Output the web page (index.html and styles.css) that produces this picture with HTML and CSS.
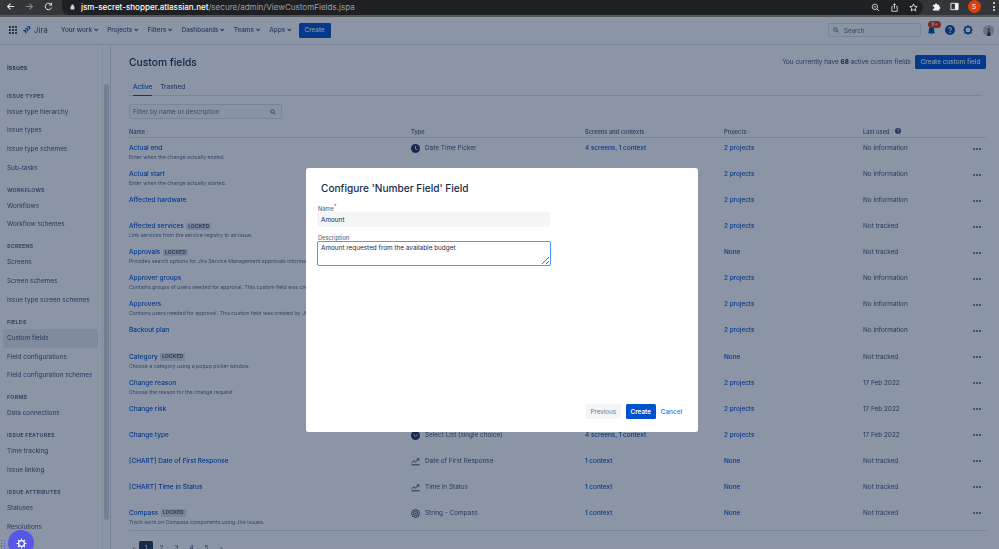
FILE: index.html
```html
<!DOCTYPE html>
<html lang="en">
<head>
<meta charset="utf-8">
<title>Custom fields</title>
<link rel="stylesheet" href="styles.css">
</head>
<body>
<header class="chrome">
  <div class="chrome-nav">
    <svg class="cicon" viewBox="0 0 10 10"><path d="M9 5H2M5 1.8 1.8 5 5 8.2" fill="none" stroke="#e8eaed" stroke-width="1.2"/></svg>
    <svg class="cicon" viewBox="0 0 10 10"><path d="M1 5h7M5 1.8 8.2 5 5 8.2" fill="none" stroke="#84878b" stroke-width="1.2"/></svg>
    <svg class="cicon" viewBox="0 0 10 10"><path d="M8.4 6.2A3.6 3.6 0 1 1 8 3M8.4.9v2.6H5.8" fill="none" stroke="#e8eaed" stroke-width="1.1"/></svg>
  </div>
  <div class="omnibox">
    <svg class="lock" viewBox="0 0 6 7"><path d="M1.5 3V2a1.5 1.5 0 0 1 3 0v1h.8v3.6H.7V3z" fill="#d5d7da"/></svg>
    <span class="url"><b>jsm-secret-shopper.atlassian.net</b>/secure/admin/ViewCustomFields.jspa</span>
    <div class="omni-actions">
      <svg class="cicon" viewBox="0 0 10 10"><circle cx="4.3" cy="4.3" r="3" fill="none" stroke="#d5d7da"/><path d="M6.5 6.5 9 9M3 4.3h2.6" stroke="#d5d7da"/></svg>
      <svg class="cicon" viewBox="0 0 10 10"><path d="M3.2 4H2v5.2h6V4H6.8M5 6.5V.9M3.4 2.4 5 .8l1.6 1.6" fill="none" stroke="#d5d7da"/></svg>
      <svg class="cicon" viewBox="0 0 10 10"><path d="m5 1 1.2 2.7 2.9.3-2.2 1.9.7 2.9L5 7.3 2.4 8.8l.7-2.9L.9 4l2.9-.3z" fill="none" stroke="#e0e2e4"/></svg>
    </div>
  </div>
  <div class="chrome-ext">
    <svg class="cicon" viewBox="0 0 10 10"><path d="M1 3h2.2a1.3 1.3 0 1 1 2.6 0H8v2.2a1.3 1.3 0 1 1 0 2.6V9.500H1V7.500a1.300 1.300 0 1 0 0-2.500z" fill="#f1f3f4"/></svg>
    <svg class="cicon" viewBox="0 0 10 10"><path d="M1 1.500h8v7H1z" fill="none" stroke="#f1f3f4" stroke-width="1"/><path d="M5.500 1.500H9v7H5.500z" fill="#f1f3f4"/></svg>
    <span class="profile">S</span>
    <span class="kebab"><i></i><i></i><i></i></span>
  </div>
</header>

<div class="app">
  <nav class="topnav">
    <svg class="apps" viewBox="0 0 9 9"><g fill="#344563"><rect width="2.200" height="2.200"/><rect x="3.400" width="2.200" height="2.200"/><rect x="6.800" width="2.200" height="2.200"/><rect y="3.400" width="2.200" height="2.200"/><rect x="3.400" y="3.400" width="2.200" height="2.200"/><rect x="6.800" y="3.400" width="2.200" height="2.200"/><rect y="6.800" width="2.200" height="2.200"/><rect x="3.400" y="6.800" width="2.200" height="2.200"/><rect x="6.800" y="6.800" width="2.200" height="2.200"/></g></svg>
    <div class="brand">
      <svg class="jira-mark" viewBox="0 0 9 9"><path d="M8.600.2H4.300a1.500 1.500 0 0 0 1.500 1.500h.8v.8A1.500 1.500 0 0 0 8.100 4V.7a.5.500 0 0 0-.5-.5z" fill="#0052cc"/><path d="M6.400 2.400H2.100a1.500 1.500 0 0 0 1.500 1.500h.8v.8a1.500 1.500 0 0 0 1.500 1.500V2.900a.5.500 0 0 0-.5-.5z" fill="#0052cc"/><path d="M4.200 4.600H0a1.500 1.500 0 0 0 1.500 1.500h.8v.8a1.500 1.500 0 0 0 1.500 1.500V5.100a.5.500 0 0 0-.5-.5z" fill="#0052cc"/></svg>
      <span class="jira-word">Jira</span>
    </div>
    <ul class="menu">
      <li>Your work<i class="caret"></i></li>
      <li>Projects<i class="caret"></i></li>
      <li>Filters<i class="caret"></i></li>
      <li>Dashboards<i class="caret"></i></li>
      <li>Teams<i class="caret"></i></li>
      <li>Apps<i class="caret"></i></li>
    </ul>
    <button class="btn-primary nav-create">Create</button>
    <div class="nav-right">
      <div class="search">
        <svg class="search-icon" viewBox="0 0 8 8"><circle cx="3.300" cy="3.300" r="2.300" fill="none" stroke="#42526e"/><path d="M5 5l2.300 2.300" stroke="#42526e"/></svg>
        <span>Search</span>
      </div>
      <div class="bell">
        <svg viewBox="0 0 10 10"><path d="M5 1.500a3 3 0 0 0-3 3v2L1 8h8L8 6.500v-2a3 3 0 0 0-3-3zM4 8.500h2L5 9.800z" fill="#0747a6"/></svg>
        <span class="badge">9+</span>
      </div>
      <svg class="nav-icon help" viewBox="0 0 10 10"><circle cx="5" cy="5" r="5" fill="#0747a6"/><path d="M3.500 3.900A1.500 1.500 0 1 1 5 5.400v.8" fill="none" stroke="#fff" stroke-width="1"/><circle cx="5" cy="7.500" r=".65" fill="#fff"/></svg>
      <svg class="nav-icon gear" viewBox="0 0 10 10"><circle cx="5" cy="5" r="3.200" fill="none" stroke="#0747a6" stroke-width="1.500"/><path d="M5 0v1.500M5 8.500V10M0 5h1.500M8.500 5H10M1.500 1.500l1 1M7.500 7.500l1 1M1.500 8.500l1-1M7.500 2.500l1-1" stroke="#0747a6" stroke-width="1.200"/></svg>
      <svg class="avatar" viewBox="0 0 11 11"><circle cx="5.500" cy="5.500" r="5.500" fill="#c6bdb6"/><circle cx="5.800" cy="4.500" r="1.500" fill="#6f6a6a"/><path d="M4.200 11c0-3 .7-5 1.600-5S7.500 8 7.500 11z" fill="#33333d"/></svg>
    </div>
  </nav>

  <div class="workspace">
    <aside class="sidebar">
      <div class="side-list">
        <div class="side-title">Issues</div>
        <div class="side-head">ISSUE TYPES</div>
        <a class="side-item">Issue type hierarchy</a>
        <a class="side-item">Issue types</a>
        <a class="side-item">Issue type schemes</a>
        <a class="side-item">Sub-tasks</a>
        <div class="side-head">WORKFLOWS</div>
        <a class="side-item">Workflows</a>
        <a class="side-item">Workflow schemes</a>
        <div class="side-head">SCREENS</div>
        <a class="side-item">Screens</a>
        <a class="side-item">Screen schemes</a>
        <a class="side-item">Issue type screen schemes</a>
        <div class="side-head">FIELDS</div>
        <a class="side-item current">Custom fields</a>
        <a class="side-item">Field configurations</a>
        <a class="side-item">Field configuration schemes</a>
        <div class="side-head">FORMS</div>
        <a class="side-item">Data connections</a>
        <div class="side-head">ISSUE FEATURES</div>
        <a class="side-item">Time tracking</a>
        <a class="side-item">Issue linking</a>
        <div class="side-head">ISSUE ATTRIBUTES</div>
        <a class="side-item">Statuses</a>
        <a class="side-item">Resolutions</a>
      </div>
      <div class="scrolltrack"><div class="scrollthumb"></div></div>
    </aside>

    <main class="main">
      <div class="page-head">
        <h1>Custom fields</h1>
        <div class="page-actions">
          <span class="count">You currently have <b>68</b> active custom fields</span>
          <button class="btn-primary btn-wide">Create custom field</button>
        </div>
      </div>
      <div class="tabs"><span class="tab active">Active</span><span class="tab">Trashed</span></div>
      <div class="filter">
        <span>Filter by name or description</span>
        <svg class="search-icon" viewBox="0 0 8 8"><circle cx="3.300" cy="3.300" r="2.300" fill="none" stroke="#42526e"/><path d="M5 5l2.300 2.300" stroke="#42526e"/></svg>
      </div>

      <div class="table">
        <div class="row head">
          <span>Name <s>:</s></span><span>Type</span><span>Screens and contexts <s>:</s></span><span>Projects <s>:</s></span>
          <span class="last-head">Last used <s>:</s> <svg class="tip" viewBox="0 0 10 10"><circle cx="5" cy="5" r="5" fill="#42526e"/><path d="M3.500 3.900A1.500 1.500 0 1 1 5 5.400v.8" fill="none" stroke="#fff"/><circle cx="5" cy="7.600" r=".7" fill="#fff"/></svg></span>
          <span></span>
        </div>

        <div class="row"><div><a class="fname">Actual end</a><p>Enter when the change actually ended.</p></div><div class="ftype"><svg class="ticon" viewBox="0 0 10 10"><circle cx="5" cy="5" r="5" fill="#253858"/><path d="M5 2.300V5.300l1.700 1.200" fill="none" stroke="#fff"/></svg>Date Time Picker</div><a>4 screens, 1 context</a><a>2 projects</a><span>No information</span><span class="dots"><i></i><i></i><i></i></span></div>
        <div class="row"><div><a class="fname">Actual start</a><p>Enter when the change actually started.</p></div><div class="ftype"><svg class="ticon" viewBox="0 0 10 10"><circle cx="5" cy="5" r="5" fill="#253858"/><path d="M5 2.300V5.300l1.700 1.200" fill="none" stroke="#fff"/></svg>Date Time Picker</div><a>4 screens, 1 context</a><a>2 projects</a><span>No information</span><span class="dots"><i></i><i></i><i></i></span></div>
        <div class="row"><div><a class="fname">Affected hardware</a></div><div class="ftype">Select List</div><a>4 screens, 1 context</a><a>2 projects</a><span>No information</span><span class="dots"><i></i><i></i><i></i></span></div>
        <div class="row"><div><a class="fname">Affected services</a><em class="lozenge">LOCKED</em><p>Link services from the service registry to an issue.</p></div><div class="ftype">Affected services</div><a>1 context</a><a>2 projects</a><span>Not tracked</span><span class="dots"><i></i><i></i><i></i></span></div>
        <div class="row"><div><a class="fname">Approvals</a><em class="lozenge">LOCKED</em><p>Provides search options for Jira Service Management approvals information stored on issues.</p></div><div class="ftype">Approvals</div><a>1 context</a><a>None</a><span>Not tracked</span><span class="dots"><i></i><i></i><i></i></span></div>
        <div class="row"><div><a class="fname">Approver groups</a><p>Contains groups of users needed for approval. This custom field was created by Jira Service Management.</p></div><div class="ftype">Group Picker</div><a>1 context</a><a>2 projects</a><span>No information</span><span class="dots"><i></i><i></i><i></i></span></div>
        <div class="row"><div><a class="fname">Approvers</a><p>Contains users needed for approval. This custom field was created by Jira Service Management.</p></div><div class="ftype">User Picker</div><a>1 context</a><a>2 projects</a><span>No information</span><span class="dots"><i></i><i></i><i></i></span></div>
        <div class="row"><div><a class="fname">Backout plan</a></div><div class="ftype">Paragraph</div><a>1 context</a><a>2 projects</a><span>No information</span><span class="dots"><i></i><i></i><i></i></span></div>
        <div class="row"><div><a class="fname">Category</a><em class="lozenge">LOCKED</em><p>Choose a category using a popup picker window.</p></div><div class="ftype">Category</div><a>1 context</a><a>None</a><span>Not tracked</span><span class="dots"><i></i><i></i><i></i></span></div>
        <div class="row"><div><a class="fname">Change reason</a><p>Choose the reason for the change request</p></div><div class="ftype">Select List</div><a>1 context</a><a>2 projects</a><span>17 Feb 2022</span><span class="dots"><i></i><i></i><i></i></span></div>
        <div class="row"><div><a class="fname">Change risk</a></div><div class="ftype">Select List</div><a>1 context</a><a>2 projects</a><span>17 Feb 2022</span><span class="dots"><i></i><i></i><i></i></span></div>
        <div class="row"><div><a class="fname">Change type</a></div><div class="ftype"><svg class="ticon" viewBox="0 0 10 10"><circle cx="5" cy="5" r="5" fill="#253858"/><path d="m3 4 2 2 2-2" fill="none" stroke="#fff"/></svg>Select List (single choice)</div><a>4 screens, 1 context</a><a>2 projects</a><span>17 Feb 2022</span><span class="dots"><i></i><i></i><i></i></span></div>
        <div class="row"><div><a class="fname">[CHART] Date of First Response</a></div><div class="ftype"><svg class="ticon" viewBox="0 0 10 10"><path d="M.5 8.700h9M.8 6.500l2.500-2.300 1.800 1.300 3.600-3.200M6.500 2h2.200v2" fill="none" stroke="#253858"/></svg>Date of First Response</div><a>1 context</a><a>None</a><span>Not tracked</span><span class="dots"><i></i><i></i><i></i></span></div>
        <div class="row"><div><a class="fname">[CHART] Time in Status</a></div><div class="ftype"><svg class="ticon" viewBox="0 0 10 10"><path d="M.5 8.700h9M.8 6.500l2.500-2.300 1.800 1.300 3.600-3.200M6.500 2h2.200v2" fill="none" stroke="#253858"/></svg>Time in Status</div><a>1 context</a><a>None</a><span>Not tracked</span><span class="dots"><i></i><i></i><i></i></span></div>
        <div class="row"><div><a class="fname">Compass</a><em class="lozenge">LOCKED</em><p>Track work on Compass components using Jira issues.</p></div><div class="ftype"><svg class="ticon" viewBox="0 0 10 10"><circle cx="5" cy="5" r="4.300" fill="none" stroke="#253858"/><circle cx="5" cy="5" r="2.300" fill="none" stroke="#253858"/><circle cx="5" cy="5" r=".8" fill="#253858"/></svg>String - Compass</div><a>1 context</a><a>None</a><span>Not tracked</span><span class="dots"><i></i><i></i><i></i></span></div>
      </div>

      <div class="pager">
        <span class="page arrow">‹</span><span class="page now">1</span><span class="page">2</span><span class="page">3</span><span class="page">4</span><span class="page">5</span><span class="page arrow">›</span>
      </div>
    </main>
  </div>

  <div class="blanket"></div>

  <section class="dialog">
    <h2>Configure 'Number Field' Field</h2>
    <label class="flabel" for="fname">Name<sup>*</sup></label>
    <input class="finput" id="fname" value="Amount" readonly>
    <label class="flabel desc" for="fdesc">Description</label>
    <textarea class="farea" id="fdesc" readonly>Amount requested from the available budget</textarea>
    <div class="dialog-foot">
      <button class="btn-ghost">Previous</button>
      <button class="btn-primary btn-strong">Create</button>
      <a class="cancel">Cancel</a>
    </div>
  </section>

  <div class="fab-grip"><i></i><i></i><i></i><i></i><i></i><i></i><i></i><i></i></div>
  <div class="fab">
    <svg viewBox="0 0 12 12"><circle cx="6" cy="6" r="3.200" fill="none" stroke="#fff" stroke-width="1.400"/><path d="M6 .5v2.200M6 9.300v2.200M.5 6h2.200M9.300 6h2.200M2.100 2.100l1.600 1.600M8.300 8.300l1.600 1.600M2.100 9.900l1.600-1.600M8.300 3.700l1.600-1.600" stroke="#fff" stroke-width="1.100"/></svg>
  </div>
</div>
</body>
</html>
```
FILE: styles.css
```css
* { box-sizing: border-box; }
html, body { margin: 0; height: 549px; overflow: hidden; }
body {
  display: flex;
  flex-direction: column;
  font-family: Inter, "Liberation Sans", sans-serif;
  font-size: 6.400px;
  color: #42526e;
  background: #fff;
  filter: blur(.35px);
}
p, h1, h2, ul { margin: 0; padding: 0; }
button { font-family: inherit; border: 0; padding: 0; }
a { color: #0052cc; }

/* browser chrome */
.chrome {
  height: 17px;
  flex: none;
  display: flex;
  background: #35363a;
  border-bottom: 2px solid #55575b;
}
.chrome-nav { width: 62px; display: flex; gap: 10px; padding: 2px 0 0 6px; }
.cicon { width: 9px; height: 9px; flex: none; }
.omnibox {
  width: 861px;
  height: 15px;
  background: #1f2023;
  border-radius: 0 8px 8px 8px;
  display: flex;
  align-items: center;
  padding: 0 5.500px 1px 8px;
}
.lock { width: 5px; height: 6px; margin-right: 6px; }
.url { font-size: 8.050px; color: #9aa0a6; white-space: nowrap; }
.url b { color: #fff; font-weight: 500; }
.omni-actions { margin-left: auto; display: flex; gap: 10px; }
.chrome-ext { flex: 1; display: flex; align-items: center; gap: 9px; padding: 0 0 2px 8.500px; }
.profile {
  width: 13px; height: 13px; border-radius: 50%;
  background: #d9420b; color: #fff; font-size: 6.500px;
  display: flex; align-items: center; justify-content: center;
}
.kebab { display: flex; flex-direction: column; gap: 1.500px; margin-left: 3px; }
.kebab i { width: 2px; height: 2px; background: #e8eaed; border-radius: 50%; }

.app { position: relative; flex: 1; display: flex; flex-direction: column; min-height: 0; }

/* jira top nav */
.topnav {
  height: 28px;
  flex: none;
  display: flex;
  align-items: center;
  padding: 0 0 1px 9px;
  border-bottom: 1px solid #dfe1e6;
}
.apps { width: 8px; height: 8px; }
.brand { display: flex; align-items: center; gap: 3px; margin-left: 6px; width: 38px; }
.jira-mark { width: 8px; height: 8px; }
.jira-word { font-size: 7.500px; color: #344563; letter-spacing: .2px; }
.menu { display: flex; gap: 8.800px; list-style: none; font-size: 6.400px; font-weight: 500; color: #42526e; }
.menu li { display: flex; align-items: center; gap: 2px; white-space: nowrap; }
.caret { width: 2.500px; height: 2.500px; border-right: .7px solid #42526e; border-bottom: .7px solid #42526e; transform: rotate(45deg) translate(-1px, -1px); margin: 0 1px; }
.btn-primary { background: #0052cc; color: #fff; font-size: 6.400px; font-weight: 500; border-radius: 1.500px; }
.nav-create { width: 32px; height: 15px; margin-left: 7px; }
.nav-right { margin-left: auto; display: flex; align-items: center; padding-right: 5px; }
.search {
  width: 93px; height: 14.500px;
  background: #fafbfc; border: 1px solid #dfe1e6; border-radius: 2px;
  display: flex; align-items: center; gap: 5px; padding-left: 4px;
  font-size: 6.200px; color: #5e6c84;
}
.search-icon { width: 6px; height: 6px; flex: none; }
.bell { position: relative; width: 9px; height: 9px; margin-left: 5.500px; }
.bell svg { display: block; width: 9px; height: 9px; }
.badge {
  position: absolute; left: 1.500px; top: -5px;
  width: 13px; height: 7px; border-radius: 4px;
  background: #de350b; color: #fff; font-size: 5px;
  display: flex; align-items: center; justify-content: center;
}
.nav-icon { width: 10px; height: 10px; }
.help { margin-left: 9.500px; }
.gear { margin-left: 8px; }
.avatar { width: 11px; height: 11px; margin-left: 10px; }

/* layout */
.workspace { flex: 1; display: flex; min-height: 0; }
.sidebar { width: 111px; flex: none; display: flex; border-right: 1px solid #dfe1e6; position: relative; }
.side-list { width: 103px; padding: 14.500px 4px 0 3px; overflow: hidden; border-right: 1px solid #ebecf0; }
.side-title { font-size: 6.500px; font-weight: 600; padding-left: 4px; height: 27px; line-height: 16px; }
.side-head {
  font-size: 5.300px; font-weight: 700; color: #5e6c84; letter-spacing: .25px;
  height: 16px; padding: 5px 0 0 4px; line-height: 8px; white-space: nowrap;
  margin-top: 3.400px;
}
.side-title + .side-head { margin-top: 0; }
.side-item { display: block; height: 18.700px; line-height: 18.700px; padding-left: 4px; font-size: 6.400px; color: #42526e; white-space: nowrap; }
.side-item.current { background: #ebecf0; border-radius: 2px; }
.scrolltrack { width: 7px; padding: 39px 1px 0 1px; }
.scrollthumb { width: 5px; height: 436px; border-radius: 3px; background: #d4d7de; }

.main { flex: 1; padding: 10px 13px 0 18px; min-width: 0; overflow: hidden; }
.page-head { display: flex; justify-content: space-between; align-items: center; height: 14px; }
h1 { font-size: 10.300px; font-weight: 500; color: #172b4d; }
.page-actions { display: flex; align-items: center; gap: 4px; }
.count { font-size: 6.400px; }
.count b { font-weight: 700; color: #172b4d; }
.btn-wide { width: 71px; height: 14.500px; }

.tabs { margin-top: 11px; height: 16px; display: flex; gap: 8px; padding-left: 4px; border-bottom: 1px solid #dfe1e6; margin-right: 4px; font-size: 6.400px; font-weight: 500; }
.tab { height: 16px; line-height: 15px; }
.tab.active { color: #0052cc; border-bottom: 1.500px solid #0052cc; }

.filter {
  margin-top: 8px; width: 153px; height: 14.500px;
  border: 1px solid #dfe1e6; background: #fafbfc; border-radius: 2px;
  display: flex; align-items: center; justify-content: space-between; padding: 1px 5px 0 3px;
  font-size: 6.400px; color: #6b778c;
}

.table { margin-top: 7.500px; border-bottom: 1px solid #dfe1e6; padding-bottom: 1px; }
.row {
  display: grid;
  grid-template-columns: 282px 174px 139px 139px 110px 13px;
  height: 26.070px;
  padding-top: 6px;
  line-height: 9px;
  font-size: 6.400px;
  white-space: nowrap;
}
.row > a { font-weight: 500; }
.row.head { height: 12px; padding-top: 1px; border-bottom: 1px solid #dfe1e6; font-size: 5.700px; font-weight: 600; color: #5e6c84; }
.row.head s { text-decoration: none; color: #97a0af; }
.last-head { display: flex; gap: 2px; align-items: flex-start; }
.tip { width: 6px; height: 6px; margin: 1px 0 0; }
.fname { font-weight: 500; font-size: 6.500px; }
.row p { font-size: 5.200px; color: #5e6c84; line-height: 8px; }
.lozenge {
  display: inline-block; height: 7.500px; line-height: 7.500px; margin-left: 2.500px; padding: 0 2px;
  font-style: normal; font-size: 5px; font-weight: 700; background: #dfe1e6; color: #42526e;
  border-radius: 1px; letter-spacing: .1px; vertical-align: .5px;
}
.ftype { display: flex; align-items: flex-start; gap: 5px; }
.ticon { width: 9px; height: 9px; flex: none; }
.dots { display: flex; gap: 1.100px; align-items: center; height: 9px; }
.dots i { width: 2px; height: 2px; border-radius: 50%; background: #42526e; }

.pager { display: flex; margin-top: 10px; font-size: 6.400px; }
.page { width: 15px; height: 15px; line-height: 15px; text-align: center; }
.page.arrow { font-size: 9px; color: #6b778c; }
.pager .page:first-child { width: 10px; }
.page.now { background: #253858; color: #fff; border-radius: 1.500px; width: 14px; margin-right: 1px; }

/* dialog */
.blanket { position: absolute; inset: 0; background: rgba(9, 30, 66, .47); }
.dialog {
  position: absolute; left: 306px; top: 151px; width: 391.500px; height: 264px;
  background: #fff; border-radius: 2.500px;
  display: flex; flex-direction: column;
  padding: 14px 11px 13px 11px;
}
h2 { font-size: 10.100px; font-weight: 500; color: #172b4d; padding-left: 4px; line-height: 13px; height: 24px; }
.flabel { font-size: 5.700px; font-weight: 500; color: #5e6c84; line-height: 6px; height: 6px; padding-left: 1px; }
.flabel sup { color: #de350b; font-size: 5px; line-height: 0; }
.finput {
  width: 233px; height: 15px; flex: none;
  border: 0; background: #f4f5f7; border-radius: 2px; padding: 0 4px;
  font: 6.400px Inter, sans-serif; color: #172b4d; outline: 0;
}
.desc { margin-top: 8px; }
.farea {
  width: 233.500px; height: 25px; flex: none;
  border: 1.500px solid #4c9aff; border-radius: 2px; padding: 1.500px 3px;
  font: 6.400px/9px Inter, sans-serif; color: #172b4d; outline: 0;
}
.dialog-foot { margin-top: auto; display: flex; align-items: center; justify-content: flex-end; gap: 5px; padding-right: 4.500px; }
.btn-ghost { width: 35px; height: 15px; background: #f4f5f7; color: #6b778c; font-size: 6.300px; border-radius: 1.500px; }
.btn-strong { width: 30px; height: 15px; font-weight: 600; }
.cancel { font-size: 6.400px; font-weight: 500; color: #2f6fe0; }

/* floating widget */
.fab { position: absolute; left: 8px; top: 513px; width: 26px; height: 26px; border-radius: 50%; background: #5757e8; display: flex; align-items: center; justify-content: center; }
.fab svg { width: 11px; height: 11px; }
.fab-grip { position: absolute; left: 1px; top: 523px; width: 6px; display: grid; grid-template-columns: 1.500px 1.500px; gap: 1.500px; }
.fab-grip i { width: 1.200px; height: 1.200px; background: #5757e8; }
```
